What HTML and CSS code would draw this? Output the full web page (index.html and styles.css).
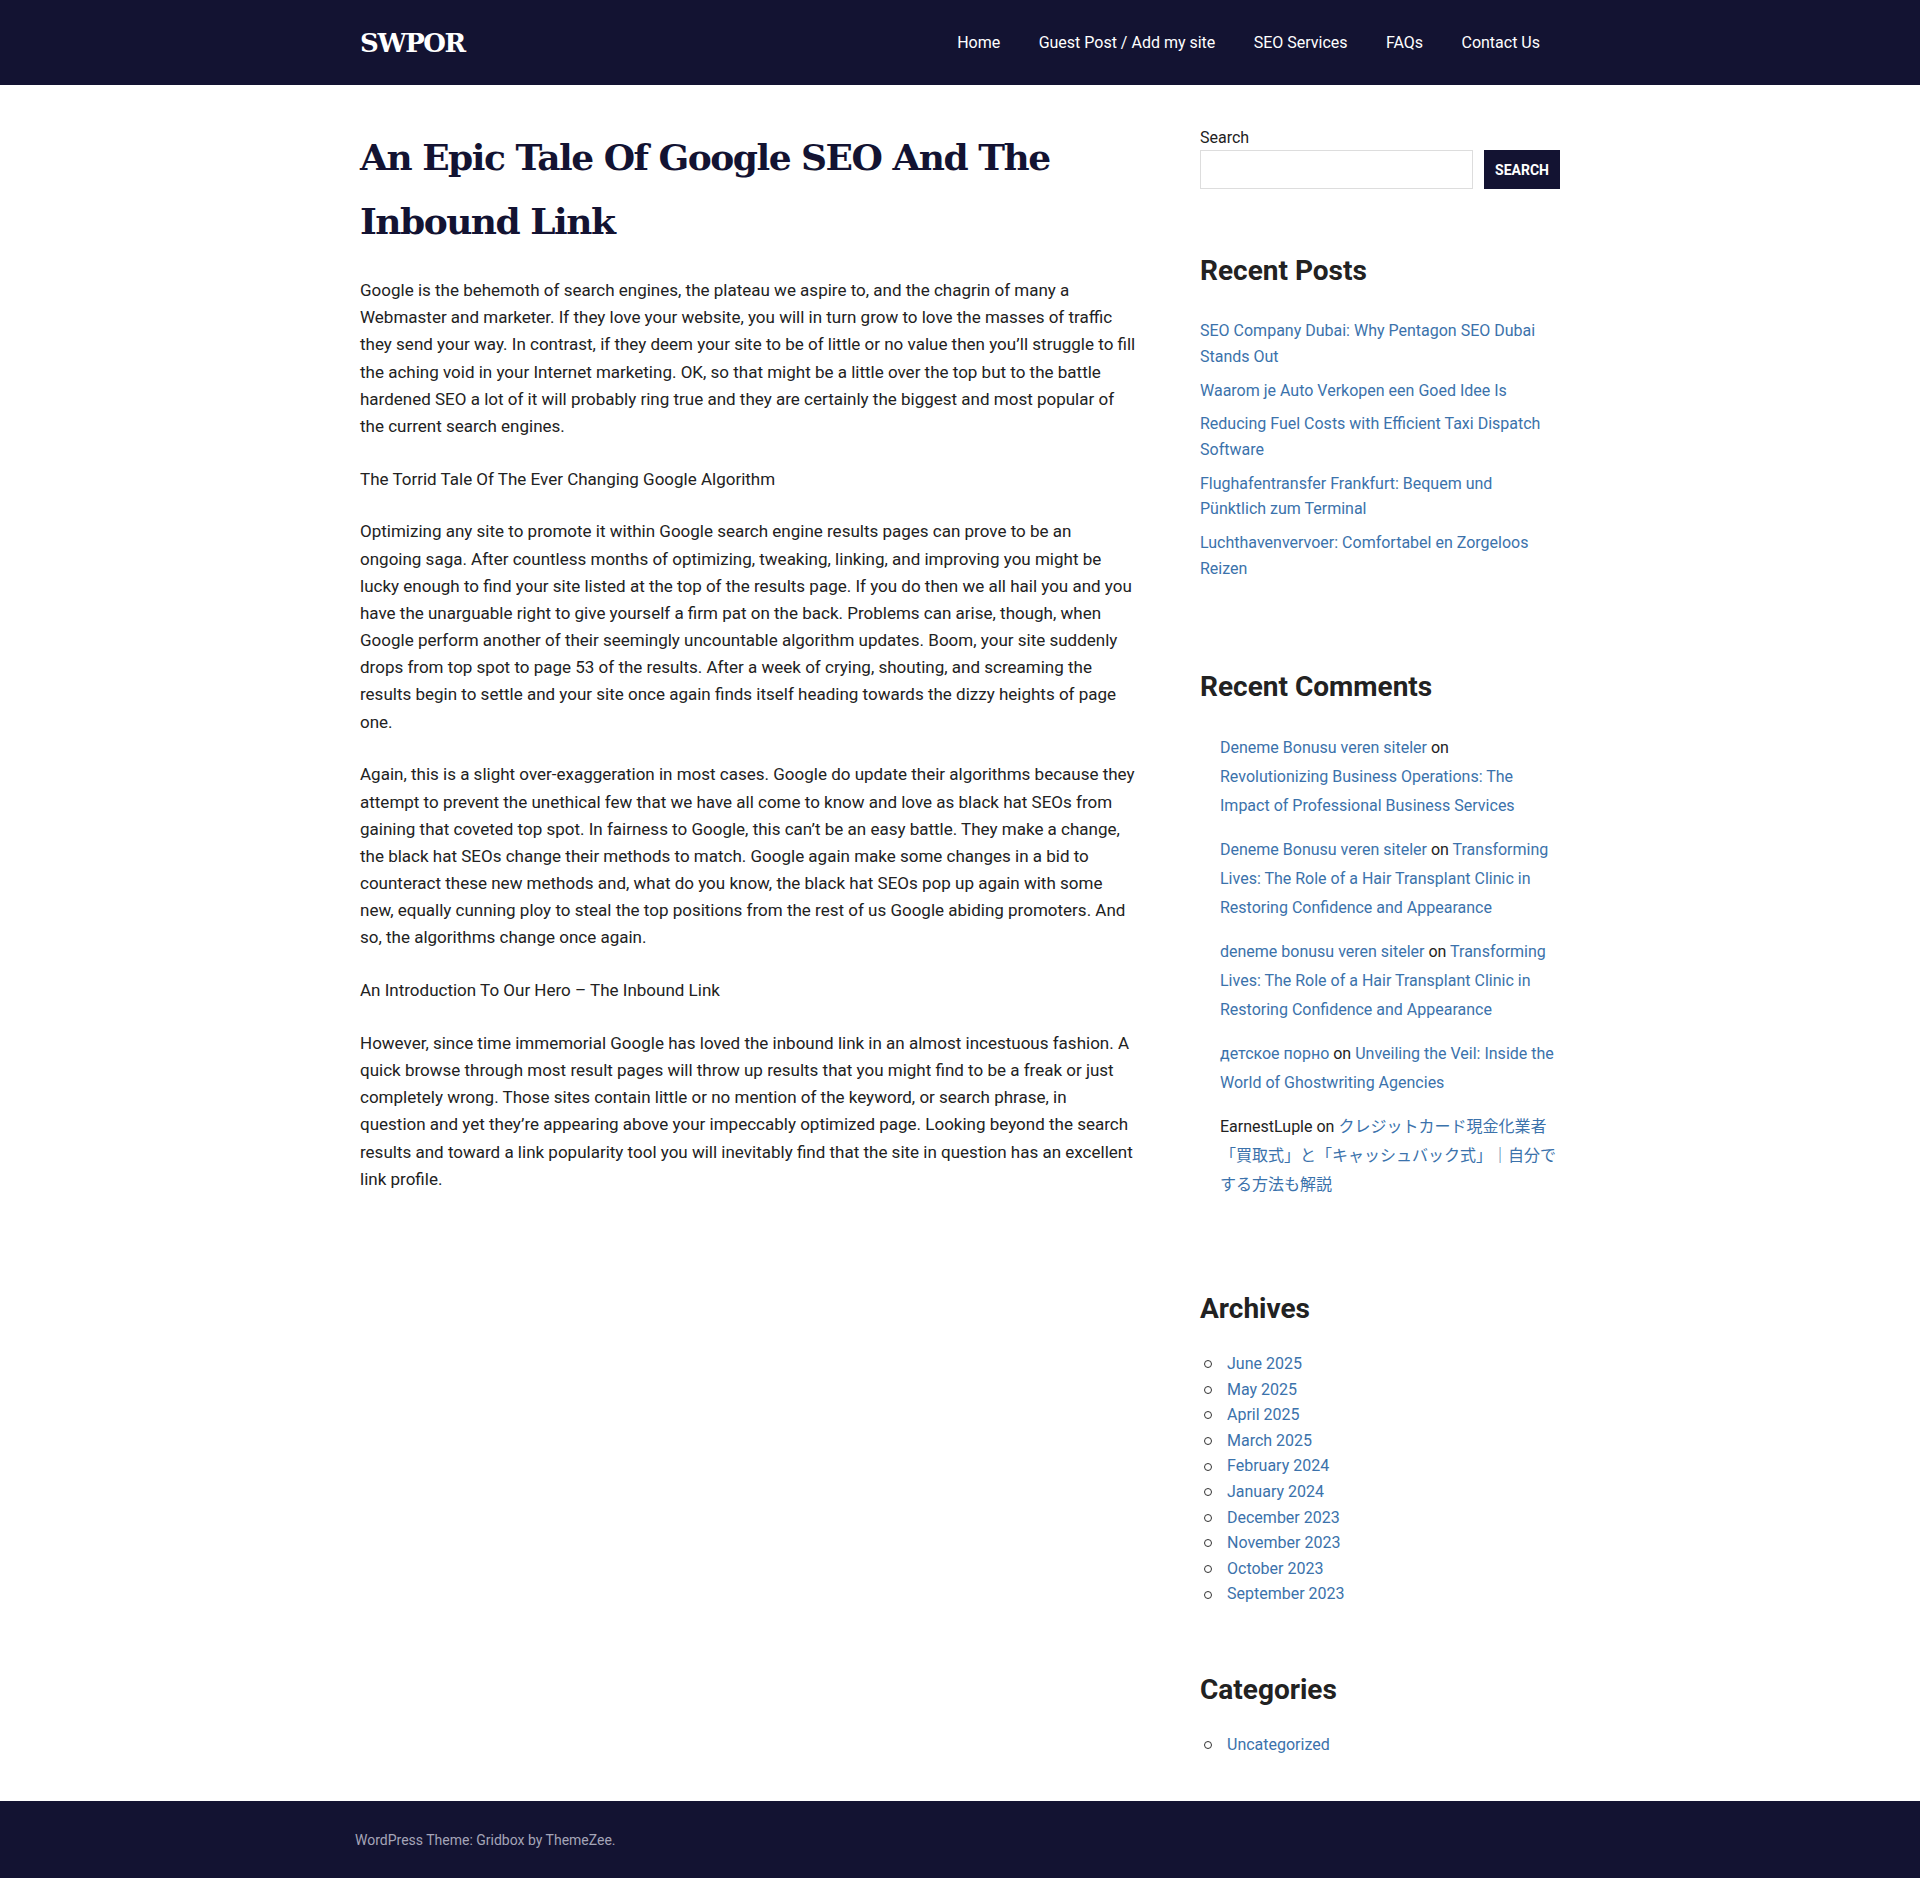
FILE: index.html
```html
<!DOCTYPE html>
<html lang="en">
<head>
<meta charset="utf-8">
<title>An Epic Tale Of Google SEO And The Inbound Link – SWPOR</title>
<link rel="stylesheet" href="styles.css">
</head>
<body>
<header class="site-header">
  <div class="container header-inner">
    <a class="site-title" href="#">SWPOR</a>
    <nav class="main-nav">
      <ul class="menu">
        <li><a href="#">Home</a></li>
        <li><a href="#">Guest Post / Add my site</a></li>
        <li><a href="#">SEO Services</a></li>
        <li><a href="#">FAQs</a></li>
        <li><a href="#">Contact Us</a></li>
      </ul>
    </nav>
  </div>
</header>

<div class="container site-content">
  <main class="content-area">
    <article class="post">
      <h1 class="entry-title">An Epic Tale Of Google SEO And The Inbound Link</h1>
      <div class="entry-content">
        <p>Google is the behemoth of search engines, the plateau we aspire to, and the chagrin of many a Webmaster and marketer. If they love your website, you will in turn grow to love the masses of traffic they send your way. In contrast, if they deem your site to be of little or no value then you’ll struggle to fill the aching void in your Internet marketing. OK, so that might be a little over the top but to the battle hardened SEO a lot of it will probably ring true and they are certainly the biggest and most popular of the current search engines.</p>
        <p>The Torrid Tale Of The Ever Changing Google Algorithm</p>
        <p>Optimizing any site to promote it within Google search engine results pages can prove to be an ongoing saga. After countless months of optimizing, tweaking, linking, and improving you might be lucky enough to find your site listed at the top of the results page. If you do then we all hail you and you have the unarguable right to give yourself a firm pat on the back. Problems can arise, though, when Google perform another of their seemingly uncountable algorithm updates. Boom, your site suddenly drops from top spot to page 53 of the results. After a week of crying, shouting, and screaming the results begin to settle and your site once again finds itself heading towards the dizzy heights of page one.</p>
        <p>Again, this is a slight over-exaggeration in most cases. Google do update their algorithms because they attempt to prevent the unethical few that we have all come to know and love as black hat SEOs from gaining that coveted top spot. In fairness to Google, this can’t be an easy battle. They make a change, the black hat SEOs change their methods to match. Google again make some changes in a bid to counteract these new methods and, what do you know, the black hat SEOs pop up again with some new, equally cunning ploy to steal the top positions from the rest of us Google abiding promoters. And so, the algorithms change once again.</p>
        <p>An Introduction To Our Hero – The Inbound Link</p>
        <p>However, since time immemorial Google has loved the inbound link in an almost incestuous fashion. A quick browse through most result pages will throw up results that you might find to be a freak or just completely wrong. Those sites contain little or no mention of the keyword, or search phrase, in question and yet they’re appearing above your impeccably optimized page. Looking beyond the search results and toward a link popularity tool you will inevitably find that the site in question has an excellent link profile.</p>
      </div>
    </article>
  </main>

  <aside class="sidebar">
    <section class="widget widget-search">
      <label class="search-label" for="s">Search</label>
      <form class="search-form">
        <input class="search-input" id="s" type="search">
        <button class="search-button" type="button">SEARCH</button>
      </form>
    </section>

    <section class="widget widget-posts">
      <h2 class="widget-title">Recent Posts</h2>
      <ul class="plain-list posts-list">
        <li><a href="#">SEO Company Dubai: Why Pentagon SEO Dubai Stands Out</a></li>
        <li><a href="#">Waarom je Auto Verkopen een Goed Idee Is</a></li>
        <li><a href="#">Reducing Fuel Costs with Efficient Taxi Dispatch Software</a></li>
        <li><a href="#">Flughafentransfer Frankfurt: Bequem und Pünktlich zum Terminal</a></li>
        <li><a href="#">Luchthavenvervoer: Comfortabel en Zorgeloos Reizen</a></li>
      </ul>
    </section>

    <section class="widget widget-comments">
      <h2 class="widget-title">Recent Comments</h2>
      <ol class="plain-list comments-list">
        <li><a href="#">Deneme Bonusu veren siteler</a> on <a href="#">Revolutionizing Business Operations: The Impact of Professional Business Services</a></li>
        <li><a href="#">Deneme Bonusu veren siteler</a> on <a href="#">Transforming Lives: The Role of a Hair Transplant Clinic in Restoring Confidence and Appearance</a></li>
        <li><a href="#">deneme bonusu veren siteler</a> on <a href="#">Transforming Lives: The Role of a Hair Transplant Clinic in Restoring Confidence and Appearance</a></li>
        <li><a href="#">детское порно</a> on <a href="#">Unveiling the Veil: Inside the World of Ghostwriting Agencies</a></li>
        <li>EarnestLuple on <a href="#" class="cjk">クレジットカード現金化業者「買取式」と「キャッシュバック式」｜自分でする方法も解説</a></li>
      </ol>
    </section>

    <section class="widget widget-archives">
      <h2 class="widget-title">Archives</h2>
      <ul class="circle-list">
        <li><a href="#">June 2025</a></li>
        <li><a href="#">May 2025</a></li>
        <li><a href="#">April 2025</a></li>
        <li><a href="#">March 2025</a></li>
        <li><a href="#">February 2024</a></li>
        <li><a href="#">January 2024</a></li>
        <li><a href="#">December 2023</a></li>
        <li><a href="#">November 2023</a></li>
        <li><a href="#">October 2023</a></li>
        <li><a href="#">September 2023</a></li>
      </ul>
    </section>

    <section class="widget widget-categories">
      <h2 class="widget-title">Categories</h2>
      <ul class="circle-list">
        <li><a href="#">Uncategorized</a></li>
      </ul>
    </section>
  </aside>
</div>

<footer class="site-footer">
  <div class="footer-inner">WordPress Theme: Gridbox by ThemeZee.</div>
</footer>
</body>
</html>
```

FILE: styles.css
```css
* { box-sizing: border-box; }

body {
  margin: 0;
  font-family: Roboto, "Noto Sans", Arial, sans-serif;
  color: #222;
  background: #fff;
}

a { text-decoration: none; }

.container {
  width: 1200px;
  margin: 0 auto;
}

/* Header */
.site-header {
  background: #131332;
}
.header-inner {
  height: 85px;
  display: flex;
  align-items: center;
  justify-content: space-between;
}
.site-title {
  font-family: "DejaVu Serif", "Liberation Serif", serif;
  font-weight: bold;
  font-size: 26px;
  letter-spacing: -1.4px;
  color: #fff;
  line-height: 1;
}
.menu {
  list-style: none;
  margin: 0;
  padding: 0;
  display: flex;
}
.menu a {
  display: block;
  padding: 0 19.2px;
  font-size: 16px;
  line-height: 24px;
  color: #fff;
}
.menu li:last-child a { padding-right: 20px; }

/* Content */
.site-content {
  display: flex;
  padding: 40px 0 43px;
}
.content-area {
  width: 840px;
  padding-right: 64px;
}
.entry-title {
  margin: 0 0 24px;
  font-family: "DejaVu Serif", "Liberation Serif", serif;
  font-weight: bold;
  font-size: 36px;
  letter-spacing: -1.5px;
  line-height: 64px;
  color: #131332;
}
.entry-content p {
  margin: 0 0 25.5px;
  font-size: 17px;
  line-height: 1.6;
  color: #222;
}

/* Sidebar */
.sidebar {
  width: 360px;
  font-size: 16px;
  line-height: 1.6;
}
.sidebar a { color: #3b72ab; }

.widget-title {
  margin: 0 0 24px;
  font-size: 28px;
  line-height: 1.4;
  font-weight: bold;
  color: #222;
}

.search-label {
  display: block;
  font-size: 16px;
  line-height: 24px;
  margin-top: 1px;
  color: #222;
}
.search-form {
  display: flex;
  gap: 11px;
  margin: 0;
}
.search-input {
  width: 273px;
  height: 39px;
  border: 1px solid #ddd;
  margin: 0;
  padding: 0 8px;
  font: inherit;
}
.search-button {
  width: 76px;
  height: 39px;
  border: 0;
  margin: 0;
  padding: 0;
  background: #131332;
  color: #fff;
  font-family: Roboto, sans-serif;
  font-weight: bold;
  font-size: 14px;
}

.widget-search { margin-bottom: 62px; }
.widget-posts { margin-bottom: 86px; }
.widget-comments { margin-bottom: 89px; }
.widget-archives { margin-bottom: 63px; }

.plain-list {
  list-style: none;
  margin: 0;
  padding: 0;
}
.posts-list { padding-top: 4px; }
.posts-list li { margin-bottom: 8.2px; }
.posts-list li:last-child { margin-bottom: 0; }

.comments-list {
  padding-top: 4px;
  padding-left: 20px;
  line-height: 28.95px;
}
.comments-list li { margin-bottom: 15px; }
.cjk { font-family: Roboto, "Noto Sans CJK JP", sans-serif; }

.circle-list {
  list-style: none;
  margin: -1px 0 0;
  padding: 0;
}
.circle-list li {
  display: flex;
  align-items: center;
}
.circle-list li::before {
  content: "";
  flex: none;
  width: 6px;
  height: 6px;
  border: 1px solid #333;
  border-radius: 50%;
  margin: 1px 15px 0 4px;
}

/* Footer */
.site-footer {
  background: #131332;
  height: 78px;
}
.footer-inner {
  width: 1210px;
  margin: 0 auto;
  padding-top: 29px;
  font-size: 14px;
  line-height: 20px;
  color: #a5a5b8;
}
```
